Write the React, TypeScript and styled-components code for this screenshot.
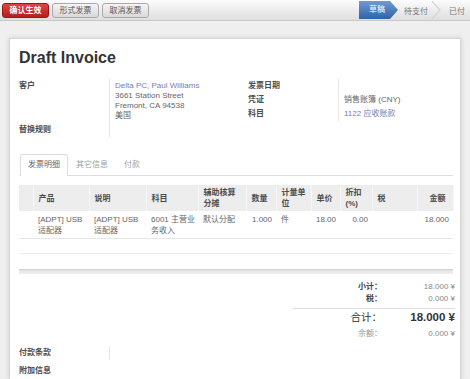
import React from 'react';
import styled, { createGlobalStyle, css } from 'styled-components';

const GlobalStyle = createGlobalStyle`
  html, body {
    margin: 0;
    padding: 0;
  }
  body {
    background: #efefef;
    font-family: "Liberation Sans", "Noto Sans CJK SC", sans-serif;
    font-size: 8px;
    color: #4c4c4c;
    overflow: hidden;
    height: 379px;
  }
`;

const TopBar = styled.div`
  display: flex;
  justify-content: space-between;
  align-items: flex-start;
  height: 21px;
  box-sizing: border-box;
  background: linear-gradient(#fcfcfc, #dedede);
  border-bottom: 1px solid #c8c8c8;
`;

const Buttons = styled.div`
  display: flex;
  gap: 3px;
  padding: 3px 0 0 2px;
`;

const Button = styled.button<{ $primary?: boolean }>`
  width: 47px;
  height: 15px;
  padding: 0;
  font-family: inherit;
  font-size: 8px;
  line-height: 13px;
  border-radius: 3px;
  border: 1px solid #aaaaaa;
  background: linear-gradient(#f4f4f4, #d9d9d9);
  color: #555;
  ${(p) =>
    p.$primary &&
    css`
      background: linear-gradient(#de4444, #b61f1f);
      border-color: #9e1515;
      color: #fff;
      font-weight: bold;
    `}
`;

const Status = styled.div`
  display: flex;
  align-items: center;
  height: 18px;
  margin-top: 1px;
  margin-right: 5px;
`;

const ActiveStage = styled.span`
  width: 39px;
  height: 18px;
  box-sizing: border-box;
  padding-left: 10px;
  line-height: 18px;
  color: #fff;
  background: linear-gradient(#6f9bd3, #2f62a8);
  clip-path: polygon(0 0, calc(100% - 8px) 0, 100% 50%, calc(100% - 8px) 100%, 0 100%);
`;

const Stage = styled.span<{ $gap: number }>`
  margin-left: ${(p) => p.$gap}px;
  color: #777;
`;

const Chevron = () => (
  <svg width="10" height="18" viewBox="0 0 10 18" style={{ marginLeft: 3 }}>
    <polyline points="1,0 9,9 1,18" fill="none" stroke="#d4d4d4" strokeWidth="1.2" />
  </svg>
);

const Sheet = styled.div`
  margin: 17px 0 0 9px;
  width: 452px;
  box-sizing: border-box;
  background: #fff;
  border: 1px solid #d6d6d6;
  border-bottom: none;
  box-shadow: 0 0 5px rgba(0, 0, 0, 0.15);
  padding: 9px 7px 3px 9px;
`;

const Title = styled.h1`
  margin: 0;
  font-size: 16px;
  line-height: 20px;
  font-weight: bold;
  color: #333;
`;

const FieldGrid = styled.div`
  display: grid;
  grid-template-columns: 229px 1fr;
  margin-top: 11px;
`;

const Group = styled.div`
  display: grid;
  grid-template-columns: 90px 1fr;
  align-content: start;
`;

const Label = styled.div`
  font-weight: bold;
  color: #4c4c4c;
  padding: 2px 0;
  line-height: 10px;
`;

const Value = styled.div`
  border-left: 1px solid #e6e6e6;
  padding: 2px 0 2px 5px;
  line-height: 10px;
  color: #666;
`;

const Link = styled.span`
  color: #7c7bad;
`;

const TabList = styled.div`
  display: flex;
  margin-top: 17px;
  padding-left: 1px;
  border-bottom: 1px solid #dddddd;
`;

const Tab = styled.div<{ $active?: boolean }>`
  padding: 5px 7px;
  line-height: 10px;
  border: 1px solid transparent;
  border-bottom: none;
  margin-bottom: -1px;
  color: #a0a0a0;
  border-radius: 3px 3px 0 0;
  ${(p) =>
    p.$active &&
    css`
      border-color: #dddddd;
      background: #fff;
      color: #666;
      padding-bottom: 6px;
    `}
`;

const Table = styled.table`
  margin-top: 9px;
  width: 434px;
  border-collapse: collapse;
  table-layout: fixed;
`;

const Col = styled.col<{ $w: number }>`
  width: ${(p) => p.$w}px;
`;

const Th = styled.th<{ $right?: boolean }>`
  background: #ededed;
  font-weight: bold;
  color: #4c4c4c;
  text-align: ${(p) => (p.$right ? 'right' : 'left')};
  padding: 2px ${(p) => (p.$right ? 7 : 3)}px 2px 5px;
  line-height: 11px;
  vertical-align: middle;
  border-right: 1px solid #f7f7f7;
  height: 22px;
`;

const Td = styled.td<{ $num?: boolean }>`
  padding: 3px ${(p) => (p.$num ? 4 : 2)}px 2px 5px;
  line-height: 11px;
  color: #666;
  vertical-align: top;
  text-align: ${(p) => (p.$num ? 'right' : 'left')};
  border-bottom: 1px solid #e6e6e6;
`;

const EmptyCell = styled.td`
  height: 14px;
  padding: 0;
  border-bottom: 1px solid #ececec;
`;

const ScrollBar = styled.div`
  margin-top: 15px;
  height: 4px;
  border-top: 1px solid #d2d2d2;
  background: linear-gradient(#e2e2e2, #f0f0f0);
`;

const Totals = styled.div`
  margin: 7px -2px 0 auto;
  width: 162px;
  display: grid;
  grid-template-columns: 89px 73px;
`;

const TotalLabel = styled.div<{ $kind?: 'grand' | 'muted' }>`
  text-align: right;
  font-weight: bold;
  line-height: 12px;
  color: #444;
  ${(p) =>
    p.$kind === 'grand' &&
    css`
      font-size: 10.5px;
      line-height: 16px;
      padding-bottom: 3px;
      font-weight: normal;
      color: #333;
      border-top: 1px solid #dddddd;
    `}
  ${(p) =>
    p.$kind === 'muted' &&
    css`
      font-weight: normal;
      color: #999;
    `}
`;

const TotalValue = styled.div<{ $kind?: 'grand' }>`
  text-align: right;
  line-height: 12px;
  color: #888;
  ${(p) =>
    p.$kind === 'grand' &&
    css`
      font-size: 11.5px;
      line-height: 16px;
      padding-bottom: 3px;
      font-weight: bold;
      color: #333;
      border-top: 1px solid #dddddd;
    `}
`;

const Spacer = styled.div`
  grid-column: 1 / 3;
  height: 3px;
`;

const Footer = styled.div`
  margin-top: 6px;
`;

const FooterRow = styled.div<{ $gap?: number }>`
  display: grid;
  grid-template-columns: 90px 1fr;
  margin-top: ${(p) => p.$gap ?? 0}px;
`;

const columns = [14, 56, 57, 52, 48, 30, 35, 29, 32, 45, 36];

export default function App() {
  return (
    <>
      <GlobalStyle />
      <TopBar>
        <Buttons>
          <Button $primary>确认生效</Button>
          <Button>形式发票</Button>
          <Button>取消发票</Button>
        </Buttons>
        <Status>
          <ActiveStage>草稿</ActiveStage>
          <Stage $gap={6}>待支付</Stage>
          <Chevron />
          <Stage $gap={8}>已付</Stage>
        </Status>
      </TopBar>

      <Sheet>
        <Title>Draft Invoice</Title>

        <FieldGrid>
          <Group>
            <Label>客户</Label>
            <Value>
              <Link>Delta PC, Paul Williams</Link>
              <br />
              3661 Station Street
              <br />
              Fremont, CA 94538
              <br />
              美国
            </Value>
            <Label>替换规则</Label>
            <Value />
          </Group>
          <Group>
            <Label>发票日期</Label>
            <Value />
            <Label>凭证</Label>
            <Value>销售账簿 (CNY)</Value>
            <Label>科目</Label>
            <Value>
              <Link>1122 应收账款</Link>
            </Value>
          </Group>
        </FieldGrid>

        <TabList>
          <Tab $active>发票明细</Tab>
          <Tab>其它信息</Tab>
          <Tab>付款</Tab>
        </TabList>

        <Table>
          <colgroup>
            {columns.map((w, i) => (
              <Col key={i} $w={w} />
            ))}
          </colgroup>
          <thead>
            <tr>
              <Th />
              <Th>产品</Th>
              <Th>说明</Th>
              <Th>科目</Th>
              <Th>辅助核算分摊</Th>
              <Th>数量</Th>
              <Th>计量单位</Th>
              <Th>单价</Th>
              <Th>折扣(%)</Th>
              <Th>税</Th>
              <Th $right>金额</Th>
            </tr>
          </thead>
          <tbody>
            <tr>
              <Td />
              <Td>[ADPT] USB 适配器</Td>
              <Td>[ADPT] USB 适配器</Td>
              <Td>6001 主营业务收入</Td>
              <Td>默认分配</Td>
              <Td $num>1.000</Td>
              <Td>件</Td>
              <Td $num>18.00</Td>
              <Td $num>0.00</Td>
              <Td />
              <Td $num>18.000</Td>
            </tr>
            <tr>
              <EmptyCell colSpan={11} />
            </tr>
          </tbody>
        </Table>
        <ScrollBar />

        <Totals>
          <TotalLabel>小计：</TotalLabel>
          <TotalValue>18.000 ¥</TotalValue>
          <TotalLabel>税：</TotalLabel>
          <TotalValue>0.000 ¥</TotalValue>
          <Spacer />
          <TotalLabel $kind="grand">合计：</TotalLabel>
          <TotalValue $kind="grand">18.000 ¥</TotalValue>
          <TotalLabel $kind="muted">余额：</TotalLabel>
          <TotalValue>0.000 ¥</TotalValue>
        </Totals>

        <Footer>
          <FooterRow>
            <Label>付款条款</Label>
            <Value />
          </FooterRow>
          <FooterRow $gap={4}>
            <Label>附加信息</Label>
          </FooterRow>
        </Footer>
      </Sheet>
    </>
  );
}
